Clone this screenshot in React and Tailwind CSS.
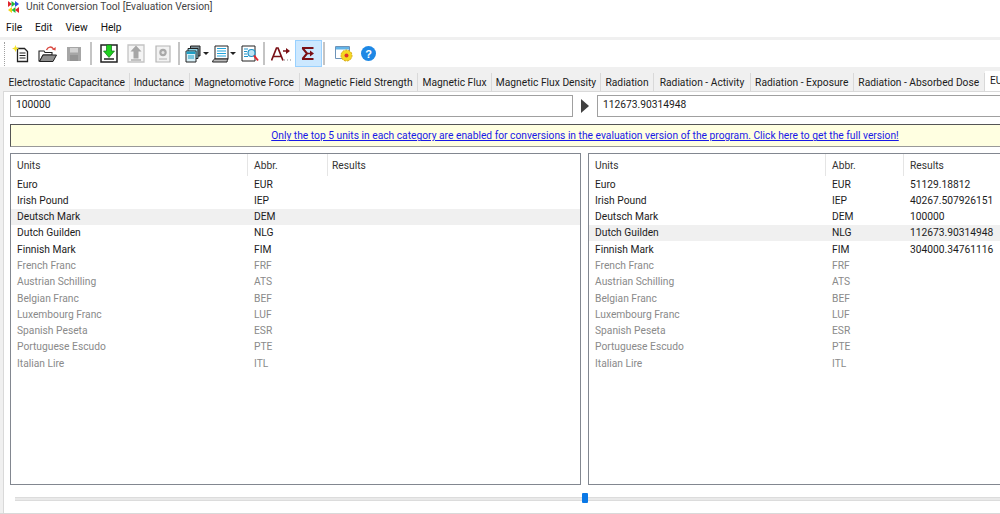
import React from "react"

const units = [
    ["Euro", "EUR"],
    ["Irish Pound", "IEP"],
    ["Deutsch Mark", "DEM"],
    ["Dutch Guilden", "NLG"],
    ["Finnish Mark", "FIM"],
    ["French Franc", "FRF"],
    ["Austrian Schilling", "ATS"],
    ["Belgian Franc", "BEF"],
    ["Luxembourg Franc", "LUF"],
    ["Spanish Peseta", "ESR"],
    ["Portuguese Escudo", "PTE"],
    ["Italian Lire", "ITL"],
]

const results = ["51129.18812", "40267.507926151", "100000", "112673.90314948", "304000.34761116"]

const tabs = [
    ["Electrostatic Capacitance", "w-[124.5px]"],
    ["Inductance", "w-[60px]"],
    ["Magnetomotive Force", "w-[110.5px]"],
    ["Magnetic Field Strength", "w-[118px]"],
    ["Magnetic Flux", "w-[74px]"],
    ["Magnetic Flux Density", "w-[109px]"],
    ["Radiation", "w-[53px]"],
    ["Radiation - Activity", "w-[97px]"],
    ["Radiation - Exposure", "w-[102.5px]"],
    ["Radiation - Absorbed Dose", "w-[131.5px]"],
]

function Logo() {
    return (
        <svg width="11" height="12" viewBox="0 0 11 12" className="shrink-0">
            <path d="M0 0l4 3-4 3z" fill="#e0242c" />
            <path d="M3.500 0l4 3-4 3z" fill="#22b83a" />
            <path d="M7 0l4 3-4 3z" fill="#2a4fe0" />
            <path d="M4 6L0 9l4 3z" fill="#f2d51a" />
            <path d="M7.500 6l-4 3 4 3z" fill="#22b83a" />
            <path d="M11 6L7 9l4 3z" fill="#e0242c" />
        </svg>
    )
}

function NewIcon() {
    return (
        <svg width="18" height="18" viewBox="0 0 18 18">
            <path d="M5.500 3.500h7l3 3v10h-10z" fill="#fff" stroke="#222" strokeWidth="1.300" />
            <path d="M7.500 8h6M7.500 10.500h6M7.500 13h6" stroke="#222" strokeWidth="1.100" />
            <path d="M3.500 0l1 2.500 2.500 1-2.500 1-1 2.500-1-2.500L0 3.500l2.500-1z" fill="#f6e32a" />
        </svg>
    )
}

function OpenIcon() {
    return (
        <svg width="20" height="18" viewBox="0 0 20 18">
            <path d="M1 6h5l1 1.500h7V10H5L2 16H1z" fill="#fff" stroke="#222" strokeWidth="1.100" />
            <path d="M5 10h13.500l-3.500 6.500H1.500z" fill="#8f8f8f" stroke="#222" strokeWidth="1" />
            <path d="M8.500 5c1.500-3.500 5-4 7-1" fill="none" stroke="#d9473f" strokeWidth="1.300" />
            <path d="M14 4.500l3.500 1 .3-3.500z" fill="#d9473f" />
        </svg>
    )
}

function SaveIcon() {
    return (
        <svg width="14" height="14" viewBox="0 0 14 14">
            <path d="M0 0h14v14H0z" fill="#a6a6a6" />
            <path d="M3 1h8v4.500H3z" fill="#d2d2d2" />
            <path d="M3 8h8v6H3z" fill="#949494" />
        </svg>
    )
}

function ImportIcon() {
    return (
        <svg width="18" height="19" viewBox="0 0 18 19">
            <path d="M1 1h16v17H1z" fill="#fff" stroke="#222" strokeWidth="1.500" />
            <path d="M4 15h10" stroke="#222" strokeWidth="1.500" />
            <path d="M6.500 1h5v6h3L9 13.500 3.500 7h3z" fill="#1fd11f" stroke="#0f6f18" strokeWidth=".7" />
        </svg>
    )
}

function ExportIcon() {
    return (
        <svg width="18" height="19" viewBox="0 0 18 19">
            <path d="M1 1h16v17H1z" fill="#f4f4f4" stroke="#c4c4c4" strokeWidth="1.300" />
            <path d="M9 1.500l5.500 6h-3v7h-5v-7h-3z" fill="#a6a6a6" />
            <path d="M4 16h10" stroke="#a6a6a6" strokeWidth="1.300" />
        </svg>
    )
}

function DeleteDocIcon() {
    return (
        <svg width="16" height="18" viewBox="0 0 16 18">
            <path d="M1 1h14v16H1z" fill="#f2f2f2" stroke="#b5b5b5" strokeWidth="1.200" />
            <circle cx="8" cy="7.500" r="3.700" fill="#a8a8a8" />
            <circle cx="8" cy="7.500" r="1.500" fill="#e4e4e4" />
            <path d="M4 14h8" stroke="#bdbdbd" strokeWidth="1.200" />
        </svg>
    )
}

function CopyIcon() {
    return (
        <svg width="17" height="18" viewBox="0 0 17 18">
            <path d="M5.500 1h9.500v10H5.500z" fill="#7d8f96" stroke="#222" />
            <path d="M3 3.500h10v10H3z" fill="#8fd2e4" stroke="#222" />
            <path d="M1 6h10v11H1z" fill="#d8f0f8" stroke="#222" />
            <path d="M1.500 6.500h9V9h-9z" fill="#1f9fc4" />
            <path d="M3 11h6M3 13h6" stroke="#1f9fc4" />
        </svg>
    )
}

function ListIcon() {
    return (
        <svg width="17" height="18" viewBox="0 0 17 18">
            <path d="M3 1h13v13H3z" fill="#fff" stroke="#222" />
            <path d="M5 3.500h9M5 6h9M5 8.500h9M5 11h9" stroke="#22a5dc" strokeWidth="1.200" />
            <path d="M.5 17c.5-2 1.500-3 2.500-3h13c-.5 1-1 2-1 3z" fill="#bbb" stroke="#222" />
        </svg>
    )
}

function PreviewIcon() {
    return (
        <svg width="18" height="18" viewBox="0 0 18 18">
            <path d="M1 1h13v15H1z" fill="#fff" stroke="#222" />
            <path d="M3 4h4M3 6.500h3M3 9h3M3 11.500h4" stroke="#2294c9" />
            <circle cx="10.500" cy="8" r="3.500" fill="#bde4f4" stroke="#2294c9" strokeWidth="1.200" />
            <path d="M13 10.500l4 5" stroke="#e0242c" strokeWidth="2" />
        </svg>
    )
}

function FontIcon() {
    return (
        <svg width="20" height="14" viewBox="0 0 20 14">
            <path d="M.5 13.500L5.500 1h1.500l5 12.500M2.500 9.500h8" fill="none" stroke="#7a1016" strokeWidth="1.700" />
            <path d="M12 4h4" stroke="#7a1016" strokeWidth="1.500" />
            <path d="M15 1l4 3-4 3z" fill="#7a1016" />
            <path d="M13 13h1M16 13h1M19 13h1" stroke="#888" strokeWidth="1.200" />
        </svg>
    )
}

function SigmaIcon() {
    return (
        <svg width="14" height="13" viewBox="0 0 14 13">
            <path d="M1 1h11.500M1 12h11.500M1.500 1L6 6.500 1.500 12" fill="none" stroke="#7a1016" strokeWidth="2" />
            <path d="M6 6.500h4" stroke="#7a1016" strokeWidth="1.500" />
            <path d="M9 3.500l4 3-4 3z" fill="#7a1016" />
        </svg>
    )
}

function SettingsIcon() {
    return (
        <svg width="18" height="17" viewBox="0 0 18 17">
            <path d="M.5 1.500h14v12H.5z" fill="#fff" stroke="#6d93b8" />
            <path d="M1 2h13v2.500H1z" fill="#62b4e8" />
            <circle cx="11.500" cy="10.500" r="5.500" fill="#f5d822" stroke="#d5a516" strokeDasharray="2 1" />
            <circle cx="11.500" cy="10.500" r="2" fill="#e0342c" />
        </svg>
    )
}

function HelpIcon() {
    return (
        <svg width="15" height="15" viewBox="0 0 15 15" className="shrink-0">
            <circle cx="7.500" cy="7.500" r="7.500" fill="#1e88e5" />
            <text x="7.500" y="11.500" textAnchor="middle" fontSize="11" fontWeight="700" fill="#fff" fontFamily="Liberation Sans, sans-serif">?</text>
        </svg>
    )
}

function Caret() {
    return <span className="ml-[1px] h-0 w-0 shrink-0 border-x-[3px] border-t-[3px] border-x-transparent border-t-[#222]" />
}

function ToolButton({ children, active, width = "w-[27px]" }) {
    return (
        <div className={`flex h-[27px] shrink-0 items-center justify-center ${width} ${active ? "border border-[#99d1ff] bg-[#cce8ff]" : ""}`}>
            {children}
        </div>
    )
}

function Separator({ margin }) {
    return <div className={`h-[23px] w-[2px] shrink-0 bg-[#c4c4c4] ${margin}`} />
}

function UnitList({ widthClass, abbrClass, resultsPad, selected, values }) {
    return (
        <div className={`h-[332px] shrink-0 overflow-hidden border border-[#828790] bg-white ${widthClass}`}>
            <div className="flex h-[22px] items-center text-[#333]">
                <div className="flex h-full w-[237px] shrink-0 items-center border-r border-[#e5e5e5] pl-[6px] pt-[2px]">Units</div>
                <div className={`flex h-full shrink-0 items-center border-r border-[#e5e5e5] pl-[6px] pt-[2px] ${abbrClass}`}>Abbr.</div>
                <div className={`pt-[2px] ${resultsPad}`}>Results</div>
            </div>
            {units.map(([name, abbr], i) => (
                <div
                    key={abbr}
                    className={`flex h-[16.3px] items-center whitespace-nowrap pt-[1px] ${i < 5 ? "text-[#1c1c1c]" : "text-[#8a8a8a]"} ${i === selected ? "bg-[#f0f0f0]" : ""}`}
                >
                    <div className="w-[237px] shrink-0 pl-[6px]">{name}</div>
                    <div className={`shrink-0 pl-[6px] ${abbrClass}`}>{abbr}</div>
                    <div className="pl-[6px]">{values ? values[i] : ""}</div>
                </div>
            ))}
        </div>
    )
}

export default function App() {
    return (
        <div className="flex h-[514px] w-[1000px] flex-col overflow-hidden bg-white font-['Roboto','Noto_Sans',sans-serif] text-[10.250px] leading-none text-[#1c1c1c]">
            <div className="flex h-[14px] items-center gap-[7px] pl-[8px] text-[#444]">
                <Logo />
                <span className="pt-[1px]">Unit Conversion Tool [Evaluation Version]</span>
            </div>
            <div className="flex h-[23px] items-center gap-[13px] pl-[6px] pt-[5px] text-[#111]">
                <span>File</span>
                <span>Edit</span>
                <span>View</span>
                <span>Help</span>
            </div>
            <div className="h-[3px] bg-[#f0f0f0]" />
            <div className="flex h-[27px] items-center">
                <div className="ml-[4px] mr-[3px] h-[24px] w-[1px] border-l border-dotted border-[#a0a0a0]" />
                <ToolButton width="w-[26.5px]"><NewIcon /></ToolButton>
                <ToolButton width="w-[26.5px]"><OpenIcon /></ToolButton>
                <ToolButton width="w-[26.5px]"><SaveIcon /></ToolButton>
                <Separator margin="ml-[2px] mr-[4px]" />
                <ToolButton><ImportIcon /></ToolButton>
                <ToolButton><ExportIcon /></ToolButton>
                <ToolButton><DeleteDocIcon /></ToolButton>
                <Separator margin="ml-[1px] mr-[4px]" />
                <ToolButton><CopyIcon /><Caret /></ToolButton>
                <ToolButton><ListIcon /><Caret /></ToolButton>
                <ToolButton width="w-[25px]"><PreviewIcon /></ToolButton>
                <Separator margin="ml-[0px] mr-[3px]" />
                <ToolButton><FontIcon /></ToolButton>
                <ToolButton active><SigmaIcon /></ToolButton>
                <Separator margin="ml-[1px] mr-[3px]" />
                <ToolButton width="w-[33px]"><SettingsIcon /></ToolButton>
                <ToolButton width="w-[15px]"><HelpIcon /></ToolButton>
            </div>
            <div className="flex flex-1 flex-col bg-[#f0f0f0] pt-[5px]">
                <div className="flex h-[19px] items-end pl-[5px]">
                    {tabs.map(([label, w]) => (
                        <div key={label} className={`flex h-[18px] shrink-0 items-center justify-center whitespace-nowrap border-r border-[#d9d9d9] bg-[#f0f0f0] pt-[2px] ${w}`}>
                            {label}
                        </div>
                    ))}
                    <div className="flex h-[20px] flex-1 items-center bg-white pl-[5px]">
                        <span className="w-[10px] overflow-hidden">EUR</span>
                    </div>
                </div>
                <div className="ml-[3px] flex-1 overflow-hidden border-l border-t border-[#d9d9d9] bg-white pl-[6px] pt-[3px]">
                    <div className="flex h-[22px] w-[1200px] items-stretch">
                        <div className="flex w-[563px] shrink-0 items-center border border-[#a0a0a0] pb-[2px] pl-[5px]">100000</div>
                        <div className="flex w-[24px] shrink-0 items-center justify-center">
                            <span className="h-0 w-0 border-y-[7px] border-l-[8px] border-y-transparent border-l-[#404040]" />
                        </div>
                        <div className="flex flex-1 items-center border border-[#a0a0a0] pb-[2px] pl-[5px]">112673.90314948</div>
                    </div>
                    <div className="mt-[7px] flex h-[23px] w-[1150px] items-center justify-center whitespace-nowrap border border-[#555] border-b-[#999] bg-[#ffffe1] pt-[2px] text-[#1a1ae6] underline">
                        Only the top 5 units in each category are enabled for conversions in the evaluation version of the program. Click here to get the full version!
                    </div>
                    <div className="mt-[6px] flex w-[1200px] gap-[7px]">
                        <UnitList widthClass="w-[571px]" abbrClass="w-[80px]" resultsPad="pl-[4px]" selected={2} />
                        <UnitList widthClass="w-[570px]" abbrClass="w-[78px]" resultsPad="pl-[6px]" selected={3} values={results} />
                    </div>
                    <div className="relative ml-[5px] mt-[12px] h-[4px] w-[1150px] border-y border-[#dcdcdc] bg-[#e9e9e9]">
                        <span className="absolute left-[567px] top-[-5px] h-[10px] w-[6px] rounded-[1px] bg-[#0a78e6]" />
                    </div>
                </div>
                <div className="h-[1px] bg-[#d9d9d9]" />
            </div>
        </div>
    )
}
